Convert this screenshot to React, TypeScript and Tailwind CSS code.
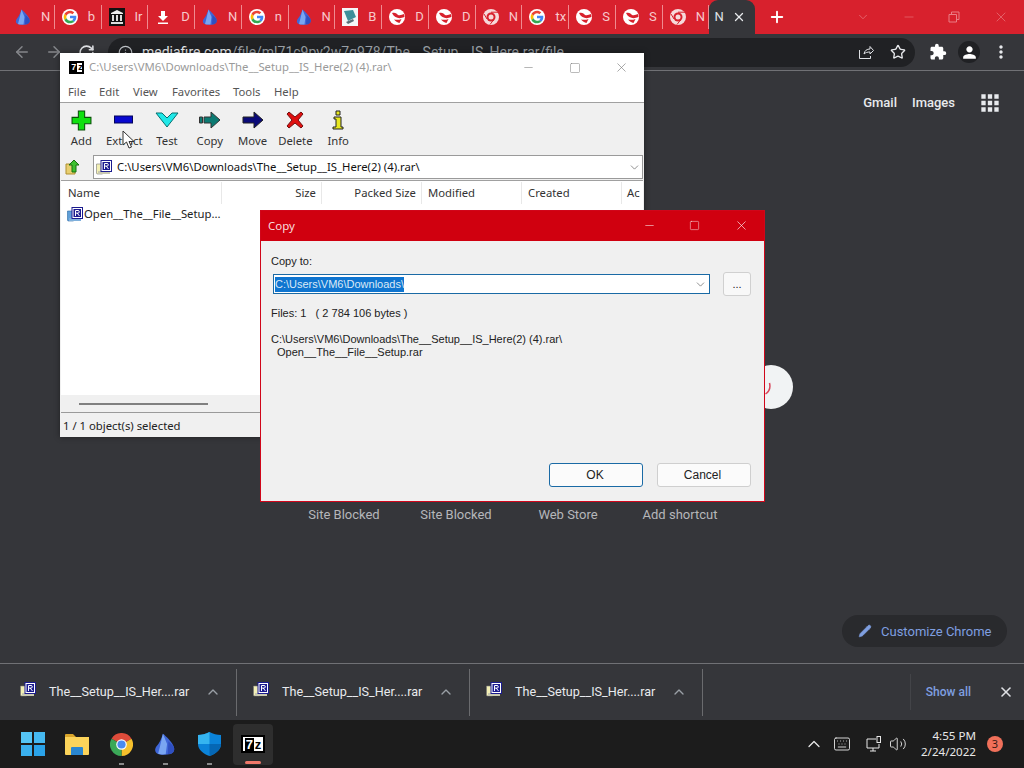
import { ArrowLeft, ArrowRight, ChevronDown, ChevronUp, Info, Keyboard, Minus, Pencil, Plus, RotateCw, Square, Star, Volume2, X } from "lucide-react";
import { MdApps, MdExtension, MdMoreVert, MdPerson } from "react-icons/md";

type Favicon = "crystal" | "google" | "museum" | "download" | "book" | "globe" | "chrome";

const tabs: { icon: Favicon; label: string }[] = [
  { icon: "crystal", label: "N" },
  { icon: "google", label: "b" },
  { icon: "museum", label: "Ir" },
  { icon: "download", label: "D" },
  { icon: "crystal", label: "N" },
  { icon: "google", label: "n" },
  { icon: "crystal", label: "N" },
  { icon: "book", label: "B" },
  { icon: "globe", label: "D" },
  { icon: "globe", label: "D" },
  { icon: "chrome", label: "N" },
  { icon: "google", label: "tx" },
  { icon: "globe", label: "S" },
  { icon: "globe", label: "S" },
  { icon: "chrome", label: "N" },
];

function Crystal({ size = 16 }: { size?: number }) {
  return (
    <svg width={size} height={size} viewBox="0 0 16 16">
      <path d="M6.500 0.500 C9 2.500 12.500 6 14 9 C15.500 12 14.500 14.500 12 15.200 C9 16 5 16 2.500 15 C0.500 14 0.300 11.500 2 9.500 C3.800 7.500 5.500 4 6.500 0.500 Z" fill="#3f66d8" />
      <path d="M6.500 0.500 L9.500 8 L8.500 15.500 C6 15.800 4 15.500 3 15 L4.500 9 Z" fill="#7aa6f2" />
      <path d="M10.500 6 L14 9.500 C15.500 12 14.500 14.500 12 15.200 L10 15.300 Z" fill="#2f4fc0" />
    </svg>
  );
}

function GoogleG({ size = 16 }: { size?: number }) {
  return (
    <svg width={size} height={size} viewBox="0 0 48 48">
      <circle cx="24" cy="24" r="24" fill="#fff" />
      <path d="M24 13c2.800 0 5.300 1 7.200 2.800l5.700-5.700C33.400 6.800 29 5 24 5 16.700 5 10.400 9.100 7.200 15.200l6.600 5.100C15.400 16.100 19.300 13 24 13z" fill="#ea4335" />
      <path d="M43 24c0-1.400-.1-2.700-.4-4H24v8h10.700c-.8 2.300-2.300 4.200-4.300 5.500l6.400 5C40.600 35 43 30 43 24z" fill="#4285f4" />
      <path d="M13.800 27.700C13.300 26.600 13 25.300 13 24s.3-2.600.8-3.700l-6.600-5.100C5.800 17.800 5 20.800 5 24s.8 6.200 2.200 8.800z" fill="#fbbc05" />
      <path d="M24 43c5.100 0 9.400-1.700 12.800-4.500l-6.400-5c-1.700 1.100-3.900 1.500-6.400 1.500-4.700 0-8.600-3.100-10.200-7.300l-6.600 5.100C10.400 38.900 16.700 43 24 43z" fill="#34a853" />
    </svg>
  );
}

function Favicon({ kind }: { kind: Favicon }) {
  if (kind === "crystal") return <Crystal />;
  if (kind === "google") return <GoogleG />;
  if (kind === "museum")
    return (
      <svg width="16" height="18" viewBox="0 0 16 18">
        <rect width="16" height="18" fill="#111" />
        <path d="M8 2 L14 5 V6 H2 V5 Z" fill="#eee" />
        <path d="M3 7h2v6H3zM7 7h2v6H7zM11 7h2v6h-2zM2 14h12v2H2z" fill="#ddd" />
      </svg>
    );
  if (kind === "download")
    return (
      <svg width="16" height="16" viewBox="0 0 16 16">
        <path d="M6 2h4v5h3l-5 5-5-5h3z" fill="#fff" />
        <path d="M3 13.500h10v1.500H3z" fill="#fff" />
      </svg>
    );
  if (kind === "book")
    return (
      <svg width="16" height="18" viewBox="0 0 16 18">
        <rect width="16" height="18" fill="#f4f7f8" />
        <path d="M2 3 L11 2 L14 9 L6 13 Z" fill="#3e8f9a" />
        <path d="M4 14 L11 11 L12 13 L6 16 Z" fill="#5a6f78" />
      </svg>
    );
  if (kind === "globe")
    return (
      <svg width="16" height="16" viewBox="0 0 16 16">
        <circle cx="8" cy="8" r="8" fill="#fff" />
        <path d="M3 4 C6 3 8 4.500 9 6 C11 6.500 13 6 15 5 L15.500 8 C12 9.500 9 9.500 6.500 8 C5 7 4 6 3 4 Z" fill="#d8212d" />
        <path d="M5 10.500 C7.500 11 10 11 12.500 10 L10.500 14 C8.500 13.500 6.500 12.500 5 10.500 Z" fill="#d8212d" />
      </svg>
    );
  return (
    <svg width="16" height="16" viewBox="0 0 16 16">
      <circle cx="8" cy="8" r="8" fill="#f6d9da" />
      <circle cx="8" cy="8" r="4.500" fill="#d8212d" />
      <circle cx="8" cy="8" r="2.500" fill="#f6d9da" />
      <path d="M8 3.200 H15 M4 10 L1 5 M10.500 11 L7 15.500" stroke="#d8212d" strokeWidth="1" />
    </svg>
  );
}

function SevenZipLogo({ className }: { className: string }) {
  return (
    <div className={`flex items-center justify-center gap-px bg-white border-2 border-black font-bold leading-none text-black ${className}`}>
      <span className="bg-black text-white px-px">7</span>
      <span>z</span>
    </div>
  );
}

function RarIcon({ className = "", blue = false }: { className?: string; blue?: boolean }) {
  return (
    <svg className={className} width="16" height="15" viewBox="0 0 16 15">
      <path d="M0.500 4h6v10H1.500a1 1 0 0 1-1-1z" fill={blue ? "#5f9fd8" : "#f3f0b5"} stroke={blue ? "#2a6aa5" : "#777"} strokeWidth="0.6" />
      <path d="M2 11h12v3H2z" fill={blue ? "#7fb0dc" : "#c9c9b0"} />
      <rect x="5" y="0.500" width="10.500" height="11" fill="#fff" stroke="#1b1b8f" />
      <rect x="6.500" y="2" width="7.500" height="8" fill="#1b1b8f" />
      <path d="M8.500 9V3.500h2.500a1.200 1.200 0 0 1 0 2.600H8.500M10.200 6.100L12.500 9" stroke="#fff" strokeWidth="1" fill="none" />
    </svg>
  );
}

function ToolButton({ label, children }: { label: string; children: React.ReactNode }) {
  return (
    <div className="w-[42.800px] flex flex-col items-center">
      <div className="h-[24px] mt-[2px] flex items-center justify-center">{children}</div>
      <span className="mt-[1px] whitespace-nowrap leading-[16px]">{label}</span>
    </div>
  );
}

function DownloadItem() {
  return (
    <div className="w-[233px] h-[47px] flex items-center border-r border-[#6a6b6e]">
      <RarIcon className="ml-[16px] mb-[5px]" />
      <span className="ml-[13px] pt-px w-[153px] text-[12.600px] text-[#e8eaed] whitespace-nowrap">The__Setup__IS_Her....rar</span>
      <ChevronUp size={16} strokeWidth={2} className="ml-[3px] text-[#9aa0a6]" />
    </div>
  );
}

const segoe = "[font-family:'Noto_Sans',sans-serif]";

export default function App() {
  return (
    <div className="relative w-[1024px] h-[768px] overflow-hidden flex flex-col bg-[#35363a] [font-family:'Roboto',sans-serif]">
      {/* Chrome tab strip */}
      <div className="h-[34px] shrink-0 bg-[#d8212d] flex items-center pl-[8px] text-[#f7c9cc]">
        {tabs.map((tab, i) => (
          <div key={i} className="w-[46.770px] h-[24px] shrink-0 flex items-center border-r border-[#f08a90] pl-[7px]">
            <div className="w-[16px] flex items-center justify-center">
              <Favicon kind={tab.icon} />
            </div>
            <span className="ml-[10px] w-[12px] overflow-hidden text-[13px] whitespace-nowrap">{tab.label}</span>
          </div>
        ))}
        <div className="w-[46px] h-[34px] shrink-0 bg-[#35363a] rounded-t-[9px] flex items-center pl-[5px] text-[#dfe1e5] text-[13px]">
          <span className="w-[18px]">N</span>
          <X size={14} strokeWidth={2.200} className="text-[#e8eaed]" />
        </div>
        <Plus size={18} strokeWidth={2.500} className="ml-[13px] text-white" />
        <div className="ml-auto flex items-center text-[#ea7d84]">
          <ChevronDown size={14} strokeWidth={1.200} className="mr-[32px]" />
          <Minus size={14} strokeWidth={1} className="mr-[32px]" />
          <svg width="12" height="12" viewBox="0 0 12 12" fill="none" stroke="currentColor" className="mr-[33px]">
            <path d="M1 3.500h7.500V11H1zM3.500 3.500V1H11v7.500H8.500" />
          </svg>
          <X size={16} strokeWidth={1} className="mr-[15px]" />
        </div>
      </div>

      {/* Chrome toolbar */}
      <div className="h-[37px] shrink-0 flex items-center border-b border-[#707175] text-[#9aa0a6]">
        <ArrowLeft size={18} strokeWidth={2} className="ml-[13px] text-[#85878b]" />
        <ArrowRight size={18} strokeWidth={2} className="ml-[14px] text-[#85878b]" />
        <RotateCw size={17} strokeWidth={2.200} className="ml-[15px] text-[#dfe1e5]" />
        <div className="ml-[13px] w-[807px] h-[29px] rounded-full bg-[#202124] flex items-center">
          <Info size={15} className="ml-[10px] text-[#bdc1c6]" />
          <span className="ml-[9px] whitespace-nowrap text-[14px]">
            <span className="text-[#e8eaed]">mediafire.com</span>/file/ml71c9py2w7q978/The__Setup__IS_Here.rar/file
          </span>
          <svg width="16" height="16" viewBox="0 0 16 16" fill="none" stroke="#dfe1e5" className="ml-auto">
            <path d="M1.500 6v8.500h11V12M6 10c.5-3.500 3-5 6-5V2.500L15.500 6.500 12 10V8c-2.500 0-4.500.5-6 2z" />
          </svg>
          <Star size={16} strokeWidth={2} className="ml-[16px] mr-[9px] text-[#e8eaed]" />
        </div>
        <MdExtension size={18} className="ml-[14px] text-white" />
        <div className="ml-[11px] w-[22px] h-[22px] rounded-full bg-[#202124] flex items-center justify-center">
          <MdPerson size={19} className="text-white" />
        </div>
        <MdMoreVert size={20} className="ml-[11px] text-[#e8eaed]" />
      </div>

      {/* New tab page */}
      <div className="flex-1 relative">
        <div className="flex items-center justify-end h-[64px] text-[13px] font-medium text-[#e8eaed]">
          <span>Gmail</span>
          <span className="ml-[15px]">Images</span>
          <MdApps size={26} className="ml-[22px] mr-[21px]" />
        </div>
        <div className="absolute left-[288px] top-[434px] flex text-[13px] text-[#b5b7ba]">
          {["Site Blocked", "Site Blocked", "Web Store", "Add shortcut"].map((label, i) => (
            <span key={i} className="w-[112px] text-center whitespace-nowrap">{label}</span>
          ))}
        </div>
        <div className="absolute left-[749px] top-[294px] w-[44px] h-[44px] rounded-full bg-[#f1f3f4]">
          <svg className="absolute left-[15px] top-[17px]" width="8" height="14" viewBox="0 0 8 14" fill="none">
            <path d="M5.500 1 C6.500 5 6 9 1.500 12" stroke="#d8455a" strokeWidth="1.500" />
          </svg>
        </div>
        <div className="absolute right-[17px] bottom-[16px] w-[165px] h-[32px] rounded-full bg-[#292a2d] flex items-center pl-[16px] text-[13px] text-[#7f9fe0]">
          <Pencil size={14} fill="currentColor" strokeWidth={1} />
          <span className="ml-[9px] pt-px whitespace-nowrap">Customize Chrome</span>
        </div>
      </div>

      {/* Downloads shelf */}
      <div className="h-[57px] shrink-0 border-t border-[#707175] flex items-center pl-[4px]">
        <DownloadItem />
        <DownloadItem />
        <DownloadItem />
        <div className="ml-auto h-[36px] border-l border-[#434448] pl-[15px] flex items-center">
          <span className="text-[12px] font-medium text-[#7f9fe0]">Show all</span>
          <X size={16} strokeWidth={2.400} className="ml-[27px] mr-[10px] text-[#dfe1e5]" />
        </div>
      </div>

      {/* Windows taskbar */}
      <div className="h-[48px] shrink-0 bg-[#1c1c1c] flex items-center pl-[11px] text-[#e8e8e8]">
        <div className="w-[44px] h-[41px] flex items-center justify-center">
          <div className="grid grid-cols-2 gap-[1.500px]">
            <div className="w-[11px] h-[11px] bg-[#55c5f5]" />
            <div className="w-[11px] h-[11px] bg-[#45b8f0]" />
            <div className="w-[11px] h-[11px] bg-[#3ab0ee]" />
            <div className="w-[11px] h-[11px] bg-[#2aa2e8]" />
          </div>
        </div>
        <div className="relative w-[44px] h-[41px] flex items-center justify-center">
          <svg width="24" height="22" viewBox="0 0 24 22">
            <path d="M0 2a1 1 0 0 1 1-1h7l3 3H0z" fill="#d9a52b" />
            <path d="M0 4h24v17a1 1 0 0 1-1 1H1a1 1 0 0 1-1-1z" fill="#fbd35a" />
            <path d="M6 15a1 1 0 0 1 1-1h10a1 1 0 0 1 1 1v7H6z" fill="#2a86d0" />
          </svg>
        </div>
        <div className="relative w-[44px] h-[41px] flex items-center justify-center">
          <svg width="23" height="23" viewBox="0 0 24 24">
            <path d="M12 12 L1.600 6 A12 12 0 0 1 22.400 6 Z" fill="#dd4b3a" />
            <path d="M12 12 L22.400 6 A12 12 0 0 1 12 24 Z" fill="#f6c02c" />
            <path d="M12 12 L12 24 A12 12 0 0 1 1.600 6 Z" fill="#3ba858" />
            <circle cx="12" cy="12" r="5.500" fill="#fff" />
            <circle cx="12" cy="12" r="4.300" fill="#4b8bf0" />
          </svg>
          <div className="absolute bottom-0 w-[5px] h-[2px] bg-[#8a8a8a]" />
        </div>
        <div className="relative w-[44px] h-[41px] flex items-center justify-center">
          <Crystal size={22} />
          <div className="absolute bottom-0 w-[5px] h-[2px] bg-[#8a8a8a]" />
        </div>
        <div className="relative w-[44px] h-[41px] flex items-center justify-center">
          <svg width="23" height="24" viewBox="0 0 23 24">
            <path d="M11.500 0 C15 2 19 3 23 3 V12 C23 18 17 22 11.500 24 C6 22 0 18 0 12 V3 C4 3 8 2 11.500 0 Z" fill="#0b83d9" />
            <path d="M11.500 0 C8 2 4 3 0 3 V12 H11.500 Z" fill="#35b4f0" />
            <path d="M11.500 12 H23 C23 18 17 22 11.500 24 Z" fill="#0567b5" />
          </svg>
          <div className="absolute bottom-0 w-[5px] h-[2px] bg-[#8a8a8a]" />
        </div>
        <div className="relative w-[40px] h-[41px] ml-[2px] rounded-[4px] bg-[#2e2e2e] flex items-center justify-center">
          <SevenZipLogo className="w-[24px] h-[18px] text-[13px] [font-family:'Liberation_Sans',sans-serif]" />
          <div className="absolute bottom-[1px] w-[16px] h-[3px] rounded-full bg-[#f0786a]" />
        </div>

        <div className="ml-auto flex items-center">
          <ChevronUp size={20} strokeWidth={1.500} />
          <Keyboard size={18} strokeWidth={1.200} className="ml-[9px]" />
          <svg width="16" height="16" viewBox="0 0 16 16" fill="none" stroke="currentColor" className="ml-[15px]">
            <path d="M10 3H1v9h12V8M4 15h6M7 12v3" />
            <rect x="11" y="0.500" width="3.500" height="6" />
          </svg>
          <Volume2 size={18} strokeWidth={1.200} className="ml-[7px]" />
          <div className={`ml-[9px] w-[60px] text-right text-[11.600px] leading-[16px] ${segoe}`}>
            <div>4:55 PM</div>
            <div>2/24/2022</div>
          </div>
          <div className={`ml-[11px] mr-[21px] w-[16px] h-[16px] rounded-full bg-[#f0705a] flex items-center justify-center text-[11px] text-[#3a1a14] ${segoe}`}>3</div>
        </div>
      </div>

      {/* 7-Zip file manager window */}
      <div className={`absolute left-[60px] top-[53px] w-[584px] h-[384px] flex flex-col bg-[#f0f0f0] text-[11.300px] text-[#222] shadow-[0_0_6px_rgba(0,0,0,0.4)] ${segoe}`}>
        <div className="h-[28px] bg-white flex items-center pl-[9px] pt-px text-[#9a9a9a]">
          <SevenZipLogo className="w-[15px] h-[13px] text-[9px] [font-family:'Liberation_Sans',sans-serif]" />
          <span className="ml-[5px]">C:\Users\VM6\Downloads\The__Setup__IS_Here(2) (4).rar\</span>
          <div className="ml-auto flex items-center text-[#777]">
            <Minus size={13} strokeWidth={1} />
            <Square size={12} strokeWidth={1} className="ml-[34px]" />
            <X size={15} strokeWidth={1} className="ml-[33px] mr-[15px]" />
          </div>
        </div>
        <div className="h-[22px] bg-white border-b border-[#a0a0a0] flex items-center pl-[8px] pt-[2px] text-[#555]">
          <span className="w-[31px]">File</span>
          <span className="w-[34px]">Edit</span>
          <span className="w-[39px]">View</span>
          <span className="w-[61px]">Favorites</span>
          <span className="w-[41px]">Tools</span>
          <span>Help</span>
        </div>
        <div className="h-[51px] flex pt-[3px] text-[#333]">
          <ToolButton label="Add">
            <svg width="21" height="21" viewBox="0 0 20 20">
              <path d="M7 1h6v6h6v6h-6v6H7v-6H1V7h6z" fill="#10e010" stroke="#085008" />
            </svg>
          </ToolButton>
          <ToolButton label="Extract">
            <svg width="20" height="10" viewBox="0 0 20 10">
              <rect x="0.500" y="1" width="18" height="7" fill="#0808d0" stroke="#04045a" />
            </svg>
          </ToolButton>
          <ToolButton label="Test">
            <svg width="24" height="16" viewBox="0 0 24 16">
              <path d="M1 1h6l5 5 5-5h6L12 15z" fill="#20e8e8" stroke="#067070" />
            </svg>
          </ToolButton>
          <ToolButton label="Copy">
            <svg width="22" height="18" viewBox="0 0 22 18">
              <path d="M0.500 6h3v6h-3z" fill="#0c7a72" stroke="#333" />
              <path d="M5 6h7V1l9 8-9 8v-5H5z" fill="#0c7a72" stroke="#333" />
            </svg>
          </ToolButton>
          <ToolButton label="Move">
            <svg width="22" height="18" viewBox="0 0 22 18">
              <path d="M1 6h11V1l9 8-9 8v-5H1z" fill="#0a0a78" stroke="#222" />
            </svg>
          </ToolButton>
          <ToolButton label="Delete">
            <svg width="18" height="18" viewBox="0 0 18 18">
              <path d="M3 1l6 5 6-5 2 2-5 6 5 6-2 2-6-5-6 5-2-2 5-6-5-6z" fill="#e01010" stroke="#701010" />
            </svg>
          </ToolButton>
          <ToolButton label="Info">
            <svg width="12" height="20" viewBox="0 0 12 20">
              <path d="M4 1h4v4H4zM2 7h7v10h2v2H1v-2h3V9H2z" fill="#e8e820" stroke="#222" />
            </svg>
          </ToolButton>
        </div>
        <div className="h-[26px] flex items-center pl-[5px]">
          <svg width="16" height="16" viewBox="0 0 16 16">
            <path d="M1 5h9v10H1z" fill="#e8cf70" stroke="#b09030" />
            <path d="M9 1l5 5h-3v7H7V6H4z" fill="#3fc030" stroke="#187010" />
          </svg>
          <div className="ml-[12px] w-[550px] h-[24px] bg-white border border-[#9a9a9a] flex items-center pl-[2px] pt-px text-[#111]">
            <RarIcon />
            <span className="ml-[5px]">C:\Users\VM6\Downloads\The__Setup__IS_Here(2) (4).rar\</span>
            <ChevronDown size={13} strokeWidth={1.200} className="ml-auto mr-[1px] text-[#555]" />
          </div>
        </div>
        <div className="flex-1 bg-white mx-px">
          <div className="h-[24px] grid grid-cols-[161px_100px_100px_100px_100px_1fr] items-center border-t border-[#a0a0a0] pt-px text-[#333] overflow-hidden">
            <span className="pl-[7px] h-full flex items-center border-r border-[#e8e8e8]">Name</span>
            <span className="pr-[5px] h-full flex items-center justify-end border-r border-[#e8e8e8]">Size</span>
            <span className="pr-[5px] h-full flex items-center justify-end border-r border-[#e8e8e8]">Packed Size</span>
            <span className="pl-[6px] h-full flex items-center border-r border-[#e8e8e8]">Modified</span>
            <span className="pl-[6px] h-full flex items-center border-r border-[#e8e8e8]">Created</span>
            <span className="pl-[5px]">Ac</span>
          </div>
          <div className="h-[20px] flex items-center pl-[6px] pt-px text-[#222]">
            <RarIcon blue />
            <span className="ml-[1px]">Open__The__File__Setup...</span>
          </div>
        </div>
        <div className="h-[18px] mx-px bg-[#f0f0f0] border-b border-[#9a9a9a] flex items-center pl-[18px]">
          <div className="w-[129px] h-[2px] bg-[#808080]" />
        </div>
        <div className="h-[24px] flex items-center pl-[3px] pt-[3px]">1 / 1 object(s) selected</div>
      </div>

      {/* Copy dialog */}
      <div className="absolute left-[260px] top-[210px] w-[505px] h-[292px] flex flex-col bg-[#f0f0f0] border border-[#d0061a] text-[11px] text-[#222] [font-family:'Liberation_Sans',sans-serif]">
        <div className={`h-[30px] shrink-0 bg-[#d0000f] flex items-center pl-[7px] text-[11.500px] text-[#f8dcdc] ${segoe}`}>
          <span>Copy</span>
          <div className="ml-auto flex items-center mb-px text-white">
            <Minus size={13} strokeWidth={1} />
            <Square size={11} strokeWidth={1} className="ml-[33px]" />
            <X size={15} strokeWidth={1} className="ml-[34px] mr-[15px]" />
          </div>
        </div>
        <div className="flex-1 flex flex-col pl-[10px] pr-[13px]">
          <div className="mt-[14px] leading-[13px]">Copy to:</div>
          <div className="mt-[4px] flex items-center">
            <div className="ml-[2px] w-[438px] h-[20px] bg-white border border-[#1a6aa5] flex items-center pl-px">
              <span className="bg-[#0f75d0] text-[#dbe9f6] leading-[15px]">C:\Users\VM6\Downloads\</span>
              <ChevronDown size={13} strokeWidth={1.200} className="ml-auto mr-[2px] text-[#555]" />
            </div>
            <div className="ml-[13px] w-[28px] h-[24px] rounded-[3px] bg-[#f8f8f8] border border-[#d0d0d0] flex items-center justify-center">...</div>
          </div>
          <div className="mt-[11px] leading-[13px] whitespace-pre">Files: 1   ( 2 784 106 bytes )</div>
          <div className="mt-[13px] leading-[13px]">C:\Users\VM6\Downloads\The__Setup__IS_Here(2) (4).rar\</div>
          <div className="pl-[6px] leading-[13px]">Open__The__File__Setup.rar</div>
          <div className="mt-auto mb-[14px] flex justify-end gap-[14px] text-[12px]">
            <div className="w-[94px] h-[24px] rounded-[3px] bg-[#fbfbfb] border border-[#1a6aa5] flex items-center justify-center pr-[2px]">OK</div>
            <div className="w-[94px] h-[24px] rounded-[3px] bg-[#fbfbfb] border border-[#cfcfcf] flex items-center justify-center pr-[3px]">Cancel</div>
          </div>
        </div>
      </div>

      {/* Mouse cursor */}
      <svg className="absolute left-[122px] top-[130px]" width="13" height="20" viewBox="0 0 13 20">
        <path d="M1 1 L1 15 L4.500 12 L7 18 L9.500 17 L7 11.500 L12 11.500 Z" fill="#fff" stroke="#333" strokeWidth="1" />
      </svg>
    </div>
  );
}
